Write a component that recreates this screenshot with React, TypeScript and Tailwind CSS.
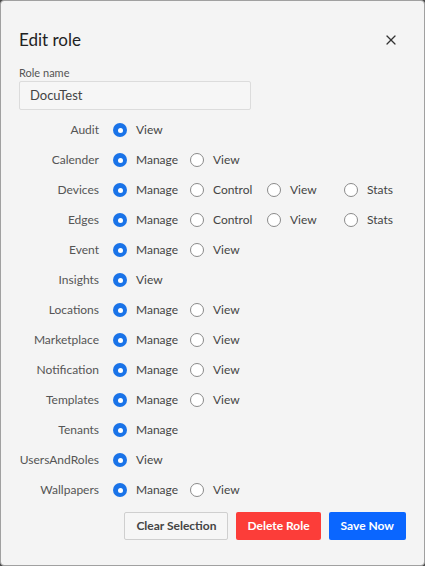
import { X } from 'lucide-react';

type Perm = { name: string; options: string[] };

const perms: Perm[] = [
  { name: 'Audit', options: ['View'] },
  { name: 'Calender', options: ['Manage', 'View'] },
  { name: 'Devices', options: ['Manage', 'Control', 'View', 'Stats'] },
  { name: 'Edges', options: ['Manage', 'Control', 'View', 'Stats'] },
  { name: 'Event', options: ['Manage', 'View'] },
  { name: 'Insights', options: ['View'] },
  { name: 'Locations', options: ['Manage', 'View'] },
  { name: 'Marketplace', options: ['Manage', 'View'] },
  { name: 'Notification', options: ['Manage', 'View'] },
  { name: 'Templates', options: ['Manage', 'View'] },
  { name: 'Tenants', options: ['Manage'] },
  { name: 'UsersAndRoles', options: ['View'] },
  { name: 'Wallpapers', options: ['Manage', 'View'] },
];

const Radio = ({ checked }: { checked: boolean }) =>
  checked ? (
    <span className="w-[14px] h-[14px] rounded-full bg-[#1a73e8] flex items-center justify-center shrink-0">
      <span className="w-[5px] h-[5px] rounded-full bg-white" />
    </span>
  ) : (
    <span className="w-[14px] h-[14px] rounded-full border border-[#8a8a8a] bg-white shrink-0" />
  );

export default function App() {
  return (
    <div className="w-[425px] h-[566px] bg-[#4a4a4a]" style={{ fontFamily: 'Lato, "Open Sans", sans-serif' }}>
      <div className="w-full h-full bg-[#f4f4f4] border border-[#a0a0a0] rounded-[4px] flex flex-col px-[18px] pt-[27px]">
        <div className="flex items-center justify-between h-[24px]">
          <h2 className="text-[17px] text-[#222] leading-[24px]">Edit role</h2>
          <X className="w-[16px] h-[16px] text-[#333] mr-[7px]" strokeWidth={1.8} />
        </div>

        <label className="mt-[14px] text-[11px] leading-[14px] text-[#555]">Role name</label>
        <div className="mt-[1px] w-[232px] h-[29px] border border-[#dcdcdc] bg-[#f6f6f6] rounded-[2px] flex items-center px-[10px] text-[13px] text-[#444]">
          DocuTest
        </div>

        <div className="mt-[5px] flex flex-col">
          {perms.map((p) => (
            <div key={p.name} className="h-[30px] flex items-center">
              <div className="w-[80px] shrink-0 text-right text-[12px] text-[#555]">{p.name}</div>
              <div className="flex items-center ml-[14px]">
                {p.options.map((o, i) => (
                  <div key={o} className="w-[77px] shrink-0 flex items-center gap-[9px] last:w-auto">
                    <Radio checked={i === 0} />
                    <span className="text-[12px] text-[#444] whitespace-nowrap">{o}</span>
                  </div>
                ))}
              </div>
            </div>
          ))}
        </div>

        <div className="mt-[7px] flex justify-end gap-[8px]">
          <button className="h-[28px] px-[11px] border border-[#cfcfcf] bg-[#f6f6f6] text-[12px] font-bold text-[#444] rounded-[2px]">
            Clear Selection
          </button>
          <button className="h-[28px] px-[11px] bg-[#fc3d39] text-[12px] font-bold text-white rounded-[2px]">
            Delete Role
          </button>
          <button className="h-[28px] px-[12px] bg-[#0a66ff] text-[12px] font-bold text-white rounded-[2px]">
            Save Now
          </button>
        </div>
      </div>
    </div>
  );
}
